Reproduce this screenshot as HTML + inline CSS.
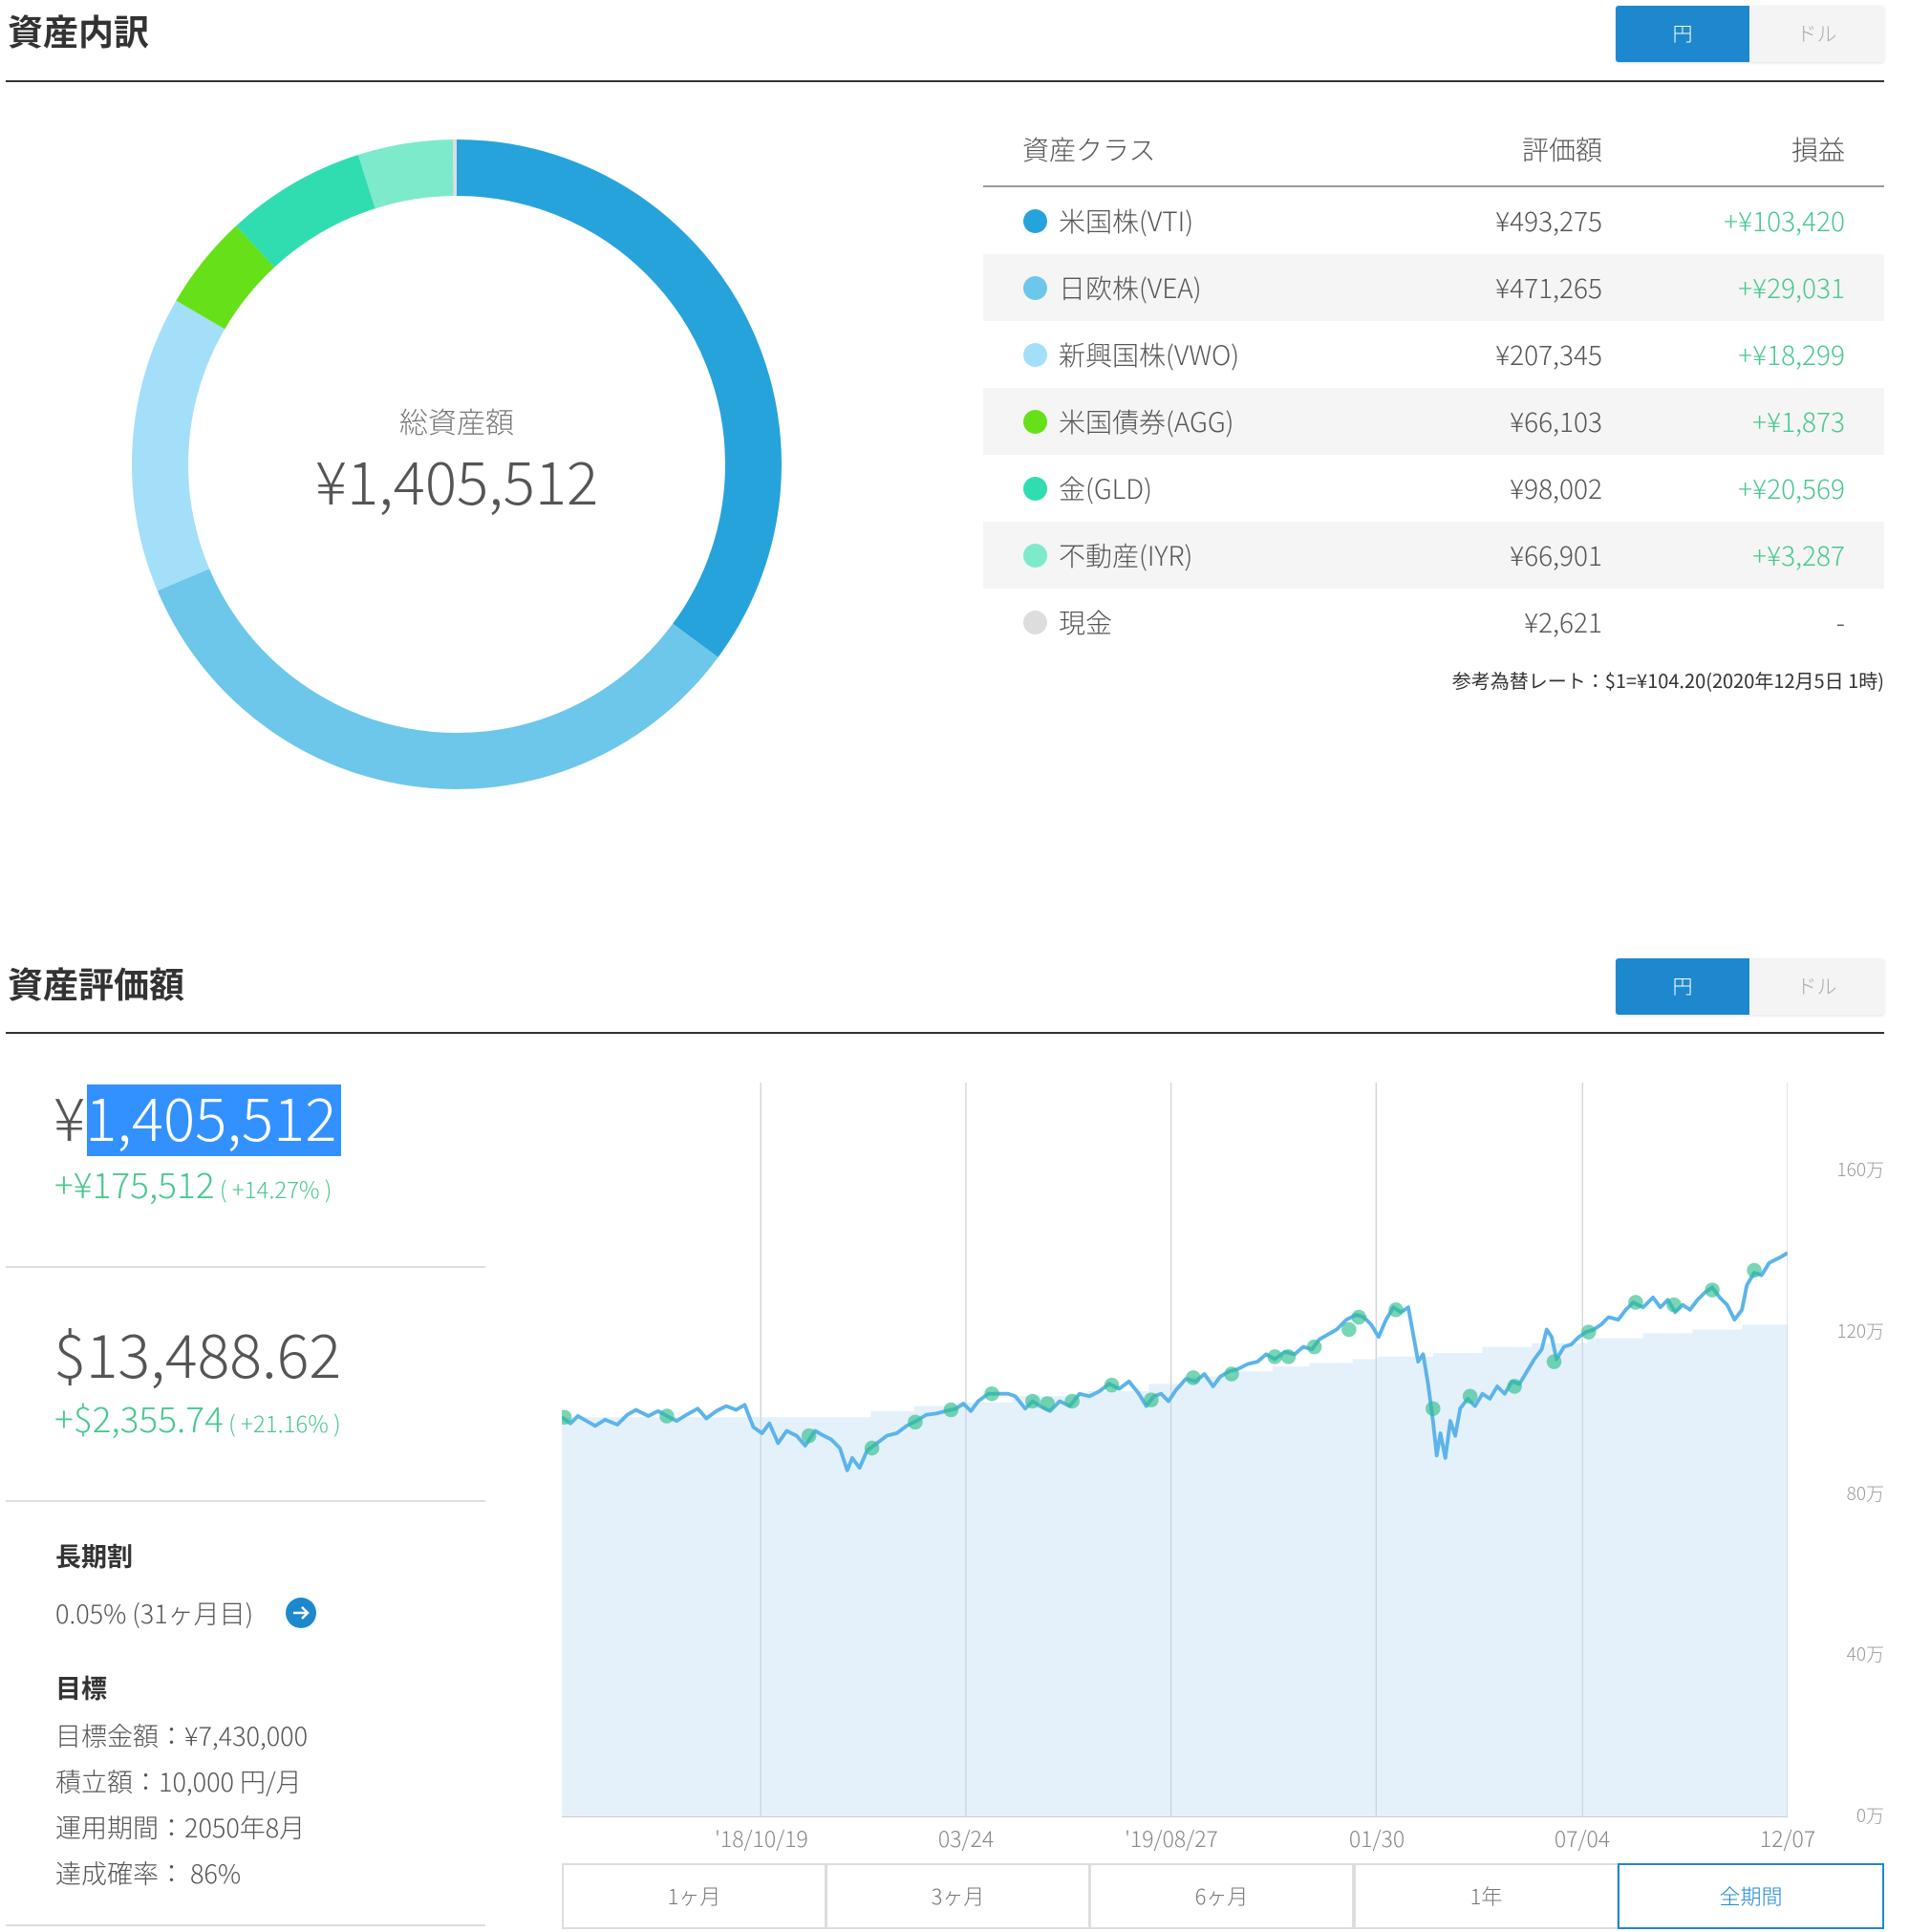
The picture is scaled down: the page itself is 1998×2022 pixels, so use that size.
<!DOCTYPE html>
<html><head><meta charset="utf-8"><style>
*{margin:0;padding:0;box-sizing:border-box}
body{width:1998px;height:2022px;background:#fff;position:relative;overflow:hidden;font-family:"Noto Sans CJK JP","Liberation Sans",sans-serif;font-weight:300;color:#555}
.a{position:absolute;white-space:nowrap}
.h{font-size:37px;font-weight:bold;color:#333}
.hr{position:absolute;left:6px;width:1966px;height:2px;background:#333}
.tg{position:absolute;left:1691px;width:281px;height:59px;border-radius:3px;overflow:hidden;box-shadow:0 1px 3px rgba(0,0,0,.12)}
.tg div{position:absolute;top:0;height:59px;line-height:59px;text-align:center;font-size:21px}
.row{position:absolute;left:1029px;width:943px;height:70px;font-size:28px;line-height:70px}
.row.g{background:#f5f5f5}
.dot{position:absolute;left:42px;top:23px;width:25px;height:25px;border-radius:50%}
.nm{position:absolute;left:79px}
.v{position:absolute;right:295px}
.p{position:absolute;right:41px;color:#4ac88d}
.gr{color:#4ac88d}
.dv{position:absolute;left:6px;width:502px;height:2px;background:#ddd}
.btn{position:absolute;top:1950px;height:69px;width:277px;border:2px solid #ddd;text-align:center;line-height:65px;font-size:22px;color:#777;background:#fff}
.yl{position:absolute;right:26px;font-size:19px;color:#999}
.xl{position:absolute;top:1906px;font-size:23px;color:#888;transform:translateX(-50%)}
</style></head><body>
<div class="a h" style="left:8px;top:4px">資産内訳</div>
<div class="tg" style="top:6px"><div style="left:0;width:140px;background:#1e88cf;color:#fff">円</div><div style="left:140px;width:141px;background:#f4f4f4;color:#aaa">ドル</div></div>
<div class="hr" style="top:84px"></div>

<svg class="a" style="left:0;top:0" width="960" height="900">
<g transform="rotate(-90 478 486)" fill="none" stroke-width="59">
<circle cx="478" cy="486" r="310.5" stroke="#27a3dc" stroke-dasharray="685 2000" stroke-dashoffset="0"/>
<circle cx="478" cy="486" r="310.5" stroke="#6cc7ea" stroke-dasharray="654 2000" stroke-dashoffset="-685"/>
<circle cx="478" cy="486" r="310.5" stroke="#a3dff8" stroke-dasharray="288 2000" stroke-dashoffset="-1339"/>
<circle cx="478" cy="486" r="310.5" stroke="#66e018" stroke-dasharray="92 2000" stroke-dashoffset="-1627"/>
<circle cx="478" cy="486" r="310.5" stroke="#30ddb0" stroke-dasharray="136 2000" stroke-dashoffset="-1719"/>
<circle cx="478" cy="486" r="310.5" stroke="#7eeacc" stroke-dasharray="92 2000" stroke-dashoffset="-1855"/>
<circle cx="478" cy="486" r="310.5" stroke="#ddd" stroke-dasharray="4 2000" stroke-dashoffset="-1947"/>
</g></svg>
<div class="a" style="left:278px;width:400px;text-align:center;top:418px;font-size:30px;color:#777">総資産額</div>
<div class="a" style="left:228px;width:500px;text-align:center;top:456px;font-size:62px;color:#555">¥1,405,512</div>

<div class="a" style="left:1070px;top:136px;font-size:28px">資産クラス</div>
<div class="a" style="right:321px;top:136px;font-size:28px">評価額</div>
<div class="a" style="right:67px;top:136px;font-size:28px">損益</div>
<div class="a" style="left:1029px;top:194px;width:943px;height:2px;background:#999"></div>
<div class="row" style="top:196px"><div class="dot" style="background:#27a3dc"></div><span class="nm">米国株(VTI)</span><span class="v">¥493,275</span><span class="p">+¥103,420</span></div>
<div class="row g" style="top:266px"><div class="dot" style="background:#6cc7ea"></div><span class="nm">日欧株(VEA)</span><span class="v">¥471,265</span><span class="p">+¥29,031</span></div>
<div class="row" style="top:336px"><div class="dot" style="background:#a3dff8"></div><span class="nm">新興国株(VWO)</span><span class="v">¥207,345</span><span class="p">+¥18,299</span></div>
<div class="row g" style="top:406px"><div class="dot" style="background:#66e018"></div><span class="nm">米国債券(AGG)</span><span class="v">¥66,103</span><span class="p">+¥1,873</span></div>
<div class="row" style="top:476px"><div class="dot" style="background:#30ddb0"></div><span class="nm">金(GLD)</span><span class="v">¥98,002</span><span class="p">+¥20,569</span></div>
<div class="row g" style="top:546px"><div class="dot" style="background:#7eeacc"></div><span class="nm">不動産(IYR)</span><span class="v">¥66,901</span><span class="p">+¥3,287</span></div>
<div class="row" style="top:616px"><div class="dot" style="background:#ddd"></div><span class="nm">現金</span><span class="v">¥2,621</span><span class="p" style="color:#555">-</span></div>
<div class="a" style="right:26px;top:697px;font-size:20px;color:#333;font-weight:normal">参考為替レート：$1=¥104.20(2020年12月5日 1時)</div>

<div class="a h" style="left:8px;top:1001px">資産評価額</div>
<div class="tg" style="top:1003px"><div style="left:0;width:140px;background:#1e88cf;color:#fff">円</div><div style="left:140px;width:141px;background:#f4f4f4;color:#aaa">ドル</div></div>
<div class="hr" style="top:1080px"></div>

<div class="a" style="left:91px;top:1135px;width:266px;height:75px;background:#3391ff"></div>
<div class="a" style="left:56px;top:1122px;font-size:62px;color:#555">¥<span style="color:#fff">1,405,512</span></div>
<div class="a gr" style="left:57px;top:1211px;font-size:37px">+¥175,512<span style="font-size:24px"> ( +14.27% )</span></div>
<div class="dv" style="top:1325px"></div>
<div class="a" style="left:56px;top:1370px;font-size:63px;color:#555">$13,488.62</div>
<div class="a gr" style="left:57px;top:1456px;font-size:37px">+$2,355.74<span style="font-size:24px"> ( +21.16% )</span></div>
<div class="dv" style="top:1570px"></div>
<div class="a" style="left:58px;top:1608px;font-size:27px;font-weight:bold;color:#333">長期割</div>
<div class="a" style="left:58px;top:1668px;font-size:27px">0.05% (31ヶ月目)</div>
<svg class="a" style="left:298px;top:1671px" width="34" height="34"><circle cx="17" cy="17" r="16" fill="#1e88cf"/><path d="M9 17h15M18 11l6 6-6 6" stroke="#fff" stroke-width="2.5" fill="none"/></svg>
<div class="a" style="left:58px;top:1746px;font-size:27px;font-weight:bold;color:#333">目標</div>
<div class="a" style="left:58px;top:1796px;font-size:27px">目標金額：¥7,430,000</div>
<div class="a" style="left:58px;top:1844px;font-size:27px">積立額：10,000 円/月</div>
<div class="a" style="left:58px;top:1892px;font-size:27px">運用期間：2050年8月</div>
<div class="a" style="left:58px;top:1940px;font-size:27px">達成確率： 86%</div>
<div class="dv" style="top:2014px"></div>

<svg class="a" style="left:588px;top:1133px" width="1283" height="769" viewBox="455 876 992 595" preserveAspectRatio="none">
<path d="M455 1471V1147H705V1142H740V1138H775V1135H820V1130H880V1126H930V1120H960V1114H1000V1110H1030V1106H1060V1103H1095V1100H1115V1098H1160V1095H1200V1090H1240V1087H1285V1083H1330V1079H1370V1076H1410V1072H1447V1471Z" fill="#e4f1fa"/>
<g stroke="#ccd4da" stroke-width="1"><path d="M616 876V1471M782 876V1471M948 876V1471M1114 876V1471M1281 876V1471M1447 876V1471"/></g>
<path d="M455 1471H1447" stroke="#ccd" stroke-width="1.5"/>
<g stroke="#ccc"><path d="M1449 948h7M1449 1079h7M1449 1210h7M1449 1340h7"/></g>
<polyline fill="none" stroke="#5cb4ea" stroke-width="3" stroke-linejoin="round" points="455,1147 462,1152 468,1146 475,1150 482,1154 490,1149 500,1153 508,1145 515,1141 525,1146 533,1142 540,1146 548,1150 556,1145 565,1140 572,1148 580,1142 588,1138 596,1141 603,1137 610,1155 617,1160 623,1152 630,1168 637,1158 645,1162 652,1170 660,1158 667,1162 673,1165 680,1172 686,1190 690,1180 696,1188 702,1174 710,1168 718,1162 726,1160 734,1154 742,1150 750,1145 758,1144 766,1142 774,1140 780,1136 786,1142 792,1134 800,1128 808,1128 816,1128 822,1130 830,1140 836,1134 842,1138 850,1142 858,1134 866,1138 874,1128 882,1130 890,1126 898,1120 906,1124 914,1118 922,1128 928,1138 934,1130 940,1128 946,1134 952,1125 960,1116 968,1118 975,1112 982,1122 988,1114 995,1110 1002,1108 1010,1104 1018,1102 1025,1096 1032,1100 1040,1094 1048,1096 1055,1090 1062,1092 1068,1084 1075,1080 1082,1076 1090,1068 1098,1064 1104,1066 1110,1072 1116,1082 1122,1068 1128,1058 1134,1062 1140,1058 1144,1080 1148,1102 1152,1096 1156,1120 1160,1150 1163,1178 1166,1160 1170,1180 1174,1150 1178,1162 1182,1140 1188,1132 1194,1138 1200,1128 1206,1132 1212,1122 1218,1128 1224,1118 1230,1120 1236,1110 1242,1100 1248,1092 1252,1076 1256,1082 1260,1100 1266,1090 1272,1088 1278,1082 1284,1078 1290,1076 1296,1072 1302,1066 1310,1068 1316,1060 1322,1054 1330,1058 1338,1050 1344,1058 1350,1052 1356,1062 1362,1056 1368,1060 1374,1052 1380,1046 1386,1042 1392,1050 1398,1056 1404,1068 1410,1060 1414,1040 1420,1030 1426,1032 1432,1022 1440,1018 1447,1014"/>
<g fill="#2fbf8e" fill-opacity=".65">
<circle cx="457" cy="1147" r="6"/><circle cx="540" cy="1146" r="6"/><circle cx="655" cy="1162" r="6"/><circle cx="706" cy="1172" r="6"/><circle cx="741" cy="1151" r="6"/><circle cx="770" cy="1141" r="6"/><circle cx="803" cy="1128" r="6"/><circle cx="836" cy="1134" r="6"/><circle cx="848" cy="1136" r="6"/><circle cx="868" cy="1134" r="6"/><circle cx="900" cy="1121" r="6"/><circle cx="932" cy="1133" r="6"/><circle cx="966" cy="1115" r="6"/><circle cx="997" cy="1112" r="6"/><circle cx="1032" cy="1098" r="6"/><circle cx="1043" cy="1098" r="6"/><circle cx="1064" cy="1090" r="6"/><circle cx="1092" cy="1076" r="6"/><circle cx="1100" cy="1066" r="6"/><circle cx="1130" cy="1060" r="6"/><circle cx="1160" cy="1140" r="6"/><circle cx="1190" cy="1130" r="6"/><circle cx="1226" cy="1122" r="6"/><circle cx="1258" cy="1102" r="6"/><circle cx="1286" cy="1078" r="6"/><circle cx="1324" cy="1054" r="6"/><circle cx="1355" cy="1056" r="6"/><circle cx="1386" cy="1044" r="6"/><circle cx="1420" cy="1028" r="6"/>
</g>
</svg>
<div class="yl" style="top:1210px">160万</div>
<div class="yl" style="top:1379px">120万</div>
<div class="yl" style="top:1549px">80万</div>
<div class="yl" style="top:1717px">40万</div>
<div class="yl" style="top:1886px">0万</div>
<div class="xl" style="left:797px">'18/10/19</div>
<div class="xl" style="left:1011px">03/24</div>
<div class="xl" style="left:1226px">'19/08/27</div>
<div class="xl" style="left:1441px">01/30</div>
<div class="xl" style="left:1656px">07/04</div>
<div class="xl" style="left:1871px">12/07</div>

<div class="btn" style="left:588px">1ヶ月</div>
<div class="btn" style="left:864px">3ヶ月</div>
<div class="btn" style="left:1140px">6ヶ月</div>
<div class="btn" style="left:1417px">1年</div>
<div class="btn" style="left:1693px;width:279px;border-color:#1e88cf;color:#1e88cf">全期間</div>
</body></html>
